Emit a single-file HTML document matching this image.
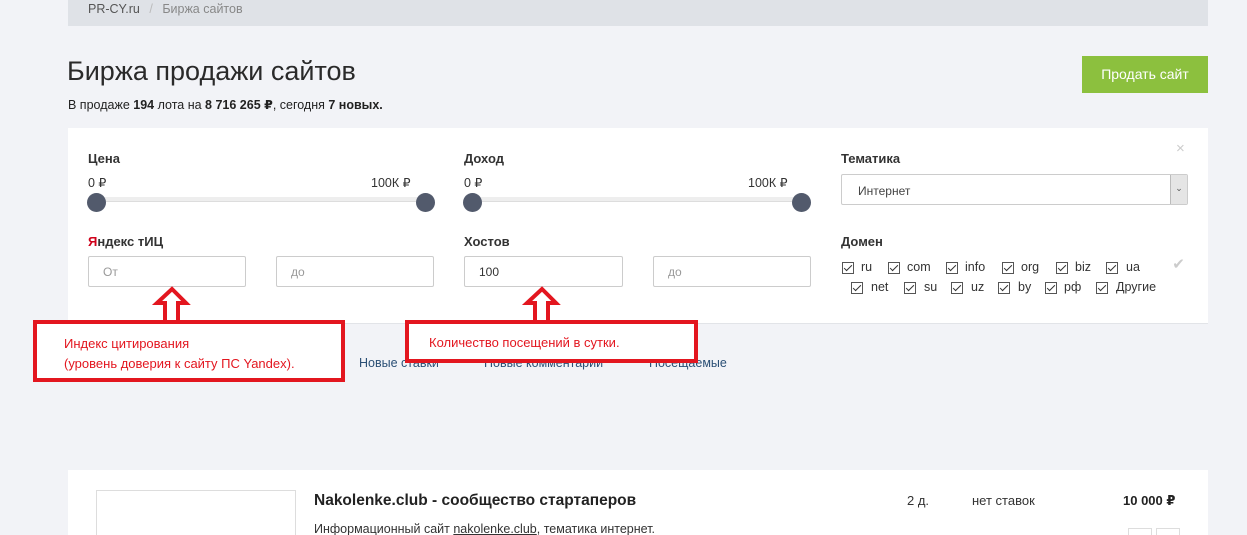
<!DOCTYPE html>
<html><head><meta charset="utf-8"><style>
*{margin:0;padding:0;box-sizing:border-box}
html,body{width:1247px;height:535px;overflow:hidden}
body{background:#f2f3f7;font-family:"Liberation Sans","DejaVu Sans",sans-serif;color:#222;position:relative}
.a{position:absolute;white-space:nowrap}
.lbl{font-size:13px;font-weight:bold;color:#333}
.inp{position:absolute;height:31px;border:1px solid #ccc;background:#fff;font-size:12px;color:#999;padding:8px 0 0 14px;border-radius:2px}
.track{position:absolute;height:5px;background:#eee;border-bottom:1px solid #ddd}
.knob{position:absolute;width:19px;height:19px;border-radius:50%;background:#525a6c}
.cb{position:absolute;width:12px;height:12px;border:1px solid #555}
.cb:after{content:"";position:absolute;left:3px;top:0px;width:3px;height:7px;border:solid #333;border-width:0 1px 1px 0;transform:rotate(45deg)}
.dm{font-size:12.5px;color:#333}
.ann{position:absolute;border:4px solid #e3161f;background:#fff;color:#e3161f;font-size:13px;line-height:20px}
</style></head><body>
<div class="a" style="left:68px;top:0;width:1140px;height:26px;background:#dfe2e7"></div>
<div class="a" style="left:88px;top:2px;font-size:12.5px;color:#555">PR-CY.ru <span style="color:#bbb;margin:0 6px">/</span> <span style="color:#888">Биржа сайтов</span></div>
<div class="a" style="left:67px;top:56px;font-size:27px;color:#2a2a2a">Биржа продажи сайтов</div>
<div class="a" style="left:68px;top:97px;font-size:12.5px;color:#222">В продаже <b>194</b> лота на <b>8 716 265 ₽</b>, сегодня <b>7 новых.</b></div>
<div class="a" style="left:1082px;top:56px;width:126px;height:37px;background:#8cc03e;color:#fff;font-size:14px;text-align:center;line-height:37px">Продать сайт</div>

<div class="a" style="left:68px;top:128px;width:1140px;height:196px;background:#fff;border-bottom:1px solid #e2e4e8"></div>
<div class="a" style="left:1176px;top:140px;color:#ccc;font-size:15px">×</div>
<div class="a lbl" style="left:88px;top:151px">Цена</div>
<div class="a dm" style="left:88px;top:175px">0 ₽</div>
<div class="a dm" style="left:371px;top:175px">100К ₽</div>
<div class="track" style="left:96px;top:197px;width:330px"></div>
<div class="knob" style="left:87px;top:193px"></div><div class="knob" style="left:416px;top:193px"></div>
<div class="a lbl" style="left:464px;top:151px">Доход</div>
<div class="a dm" style="left:464px;top:175px">0 ₽</div>
<div class="a dm" style="left:748px;top:175px">100К ₽</div>
<div class="track" style="left:473px;top:197px;width:330px"></div>
<div class="knob" style="left:463px;top:193px"></div><div class="knob" style="left:792px;top:193px"></div>
<div class="a lbl" style="left:88px;top:234px"><span style="color:#d0021b">Я</span>ндекс тИЦ</div>
<div class="inp" style="left:88px;top:256px;width:158px">От</div>
<div class="inp" style="left:276px;top:256px;width:158px">до</div>
<div class="a lbl" style="left:464px;top:234px">Хостов</div>
<div class="inp" style="left:464px;top:256px;width:159px;color:#333">100</div>
<div class="inp" style="left:653px;top:256px;width:158px">до</div>
<div class="a lbl" style="left:841px;top:151px">Тематика</div>
<div class="inp" style="left:841px;top:174px;width:347px;height:31px;color:#444;padding:9px 0 0 16px">Интернет</div>
<div class="a" style="left:1170px;top:175px;width:17px;height:29px;background:#e5e5e5;border-left:1px solid #bbb;font-size:9px;color:#555;text-align:center;line-height:27px">⌄</div>
<div class="a lbl" style="left:841px;top:234px">Домен</div>
<div class="cb" style="left:842px;top:262px"></div><div class="a dm" style="left:861px;top:260px">ru</div>
<div class="cb" style="left:888px;top:262px"></div><div class="a dm" style="left:907px;top:260px">com</div>
<div class="cb" style="left:946px;top:262px"></div><div class="a dm" style="left:965px;top:260px">info</div>
<div class="cb" style="left:1002px;top:262px"></div><div class="a dm" style="left:1021px;top:260px">org</div>
<div class="cb" style="left:1056px;top:262px"></div><div class="a dm" style="left:1075px;top:260px">biz</div>
<div class="cb" style="left:1106px;top:262px"></div><div class="a dm" style="left:1126px;top:260px">ua</div>
<div class="cb" style="left:851px;top:282px"></div><div class="a dm" style="left:871px;top:280px">net</div>
<div class="cb" style="left:904px;top:282px"></div><div class="a dm" style="left:924px;top:280px">su</div>
<div class="cb" style="left:951px;top:282px"></div><div class="a dm" style="left:971px;top:280px">uz</div>
<div class="cb" style="left:998px;top:282px"></div><div class="a dm" style="left:1018px;top:280px">by</div>
<div class="cb" style="left:1045px;top:282px"></div><div class="a dm" style="left:1064px;top:280px">рф</div>
<div class="cb" style="left:1096px;top:282px"></div><div class="a dm" style="left:1116px;top:280px">Другие</div>
<div class="a" style="left:1171px;top:258px;width:15px;height:15px;color:#ccc;font-size:15px;line-height:14px;text-align:center">✔</div>

<div class="a" style="left:359px;top:356px;font-size:12.5px;color:#2b4f75">Новые ставки</div>
<div class="a" style="left:484px;top:356px;font-size:12.5px;color:#2b4f75">Новые комментарии</div>
<div class="a" style="left:649px;top:356px;font-size:12.5px;color:#2b4f75">Посещаемые</div>
<div class="a" style="left:68px;top:378px;width:80px;height:3px;background:#2b4f75"></div>

<svg class="a" style="left:0;top:0" width="1247" height="535">
<g fill="#fff" stroke="#e3161f" stroke-width="4">
<path d="M172 289 L186 303 L178 303 L178 322 L165 322 L165 303 L157 303 Z"/>
<path d="M542 289 L556 303 L548 303 L548 322 L535 322 L535 303 L527 303 Z"/>
</g></svg>
<div class="ann" style="left:33px;top:320px;width:312px;height:62px;padding:10px 0 0 27px">Индекс цитирования<br>(уровень доверия к сайту ПС Yandex).</div>
<div class="ann" style="left:405px;top:320px;width:293px;height:43px;padding:9px 0 0 20px">Количество посещений в сутки.</div>

<div class="a" style="left:68px;top:470px;width:1140px;height:65px;background:#fff"></div>
<div class="a" style="left:96px;top:490px;width:200px;height:60px;border:1px solid #ddd"></div>
<div class="a" style="left:314px;top:492px;font-size:15.5px;font-weight:bold;color:#222">Nakolenke.club - сообщество стартаперов</div>
<div class="a" style="left:314px;top:522px;font-size:12.5px;color:#333">Информационный сайт <u>nakolenke.club</u>, тематика интернет.</div>
<div class="a" style="left:907px;top:493px;font-size:13px;color:#333">2 д.</div>
<div class="a" style="left:972px;top:493px;font-size:13px;color:#333">нет ставок</div>
<div class="a" style="left:1123px;top:493px;font-size:13px;font-weight:bold;color:#222">10 000 ₽</div>
<div class="a" style="left:1128px;top:528px;width:24px;height:20px;border:1px solid #ddd"></div>
<div class="a" style="left:1156px;top:528px;width:24px;height:20px;border:1px solid #ddd"></div>
</body></html>
